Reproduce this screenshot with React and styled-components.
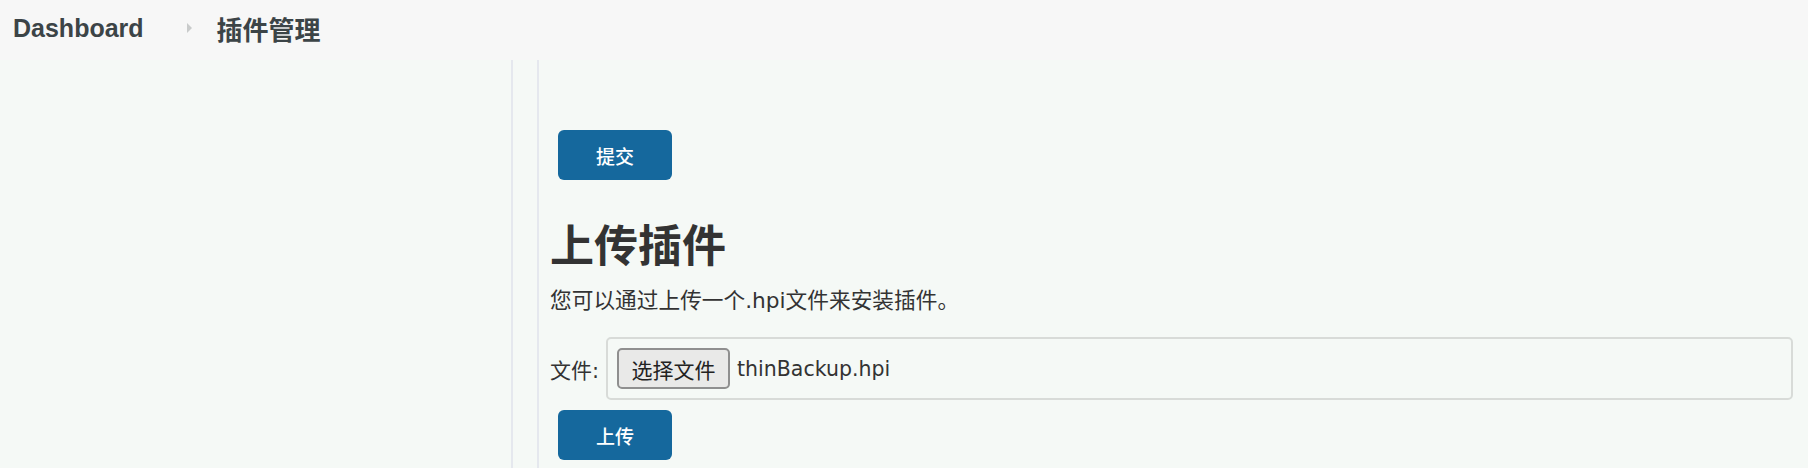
import React from "react";
import styled, { createGlobalStyle } from "styled-components";

const GlobalStyle = createGlobalStyle`
    html, body {
        margin: 0;
        padding: 0;
        background-color: #f6f9f7;
    }
    body {
        font-family: "DejaVu Sans", "Noto Sans CJK SC", sans-serif;
        color: #333;
    }
`;

const StyledPage = styled.div`
    display: flex;
    flex-direction: column;
    width: 1808px;
    height: 468px;
    overflow: hidden;
    background-color: #f5f9f6;
`;

const StyledHeader = styled.div`
    display: flex;
    align-items: center;
    height: 60px;
    padding-left: 13px;
    background-color: #f7f7f7;
    color: #3c4447;
`;

const StyledCrumb = styled.span`
    font-family: ${(p) => (p.$cjk ? '"Noto Sans CJK SC", sans-serif' : '"Liberation Sans", sans-serif')};
    font-size: ${(p) => (p.$cjk ? "26px" : "25px")};
    font-weight: 700;
    line-height: 1;
    margin-top: -3px;
`;

const StyledArrow = styled.span`
    width: 0;
    height: 0;
    margin: -4px 25px 0 43px;
    border-top: 5px solid transparent;
    border-bottom: 5px solid transparent;
    border-left: 5px solid #c9cbcb;
`;

const StyledBody = styled.div`
    display: flex;
    flex: 1;
`;

const StyledSidebar = styled.div`
    width: 511px;
    flex-shrink: 0;
    border-right: 2px solid #e5e8ee;
`;

const StyledMain = styled.div`
    display: flex;
    flex: 1;
    flex-direction: column;
    align-items: flex-start;
    margin-left: 24px;
    padding: 70px 15px 0 11px;
    border-left: 2px solid #e5e8ee;
`;

const StyledButton = styled.button`
    display: flex;
    align-items: center;
    justify-content: center;
    width: 114px;
    height: 50px;
    margin-left: 8px;
    padding: 0;
    border: none;
    border-radius: 6px;
    background-color: #15689d;
    color: #fff;
    font-family: "Noto Sans CJK SC", sans-serif;
    font-size: 19px;
    font-weight: 500;
`;

const StyledHeading = styled.h1`
    margin: 37px 0 0 0;
    font-family: "Noto Sans CJK SC", sans-serif;
    font-size: 44px;
    font-weight: 700;
    line-height: 53px;
    color: #333;
`;

const StyledText = styled.p`
    margin: 17px 0 0 0;
    font-size: 21.7px;
    line-height: 28px;
    color: #333;
`;

const StyledRow = styled.div`
    display: flex;
    align-items: center;
    align-self: stretch;
    gap: 7px;
    margin: 22px 0 10px 0;
`;

const StyledLabel = styled.label`
    font-size: 21px;
    color: #333;
`;

const StyledFileBox = styled.div`
    display: flex;
    flex: 1;
    align-items: center;
    gap: 7px;
    height: 59px;
    padding-left: 9px;
    border: 2px solid #d8dbd8;
    border-radius: 5px;
`;

const StyledPick = styled.span`
    display: flex;
    align-items: center;
    justify-content: center;
    width: 109px;
    height: 37px;
    border: 2px solid #8f8f8f;
    border-radius: 5px;
    background-color: #e9e9e8;
    font-family: "Noto Sans CJK SC", sans-serif;
    font-size: 21px;
    color: #222;
`;

const StyledFileName = styled.span`
    font-size: 20.5px;
    color: #333;
`;

const App = () => {
    return (
        <StyledPage>
            <GlobalStyle />
            <StyledHeader>
                <StyledCrumb>Dashboard</StyledCrumb>
                <StyledArrow />
                <StyledCrumb $cjk>插件管理</StyledCrumb>
            </StyledHeader>
            <StyledBody>
                <StyledSidebar />
                <StyledMain>
                    <StyledButton>提交</StyledButton>
                    <StyledHeading>上传插件</StyledHeading>
                    <StyledText>您可以通过上传一个.hpi文件来安装插件。</StyledText>
                    <StyledRow>
                        <StyledLabel>文件:</StyledLabel>
                        <StyledFileBox>
                            <StyledPick>选择文件</StyledPick>
                            <StyledFileName>thinBackup.hpi</StyledFileName>
                        </StyledFileBox>
                    </StyledRow>
                    <StyledButton>上传</StyledButton>
                </StyledMain>
            </StyledBody>
        </StyledPage>
    );
};

export default App;
